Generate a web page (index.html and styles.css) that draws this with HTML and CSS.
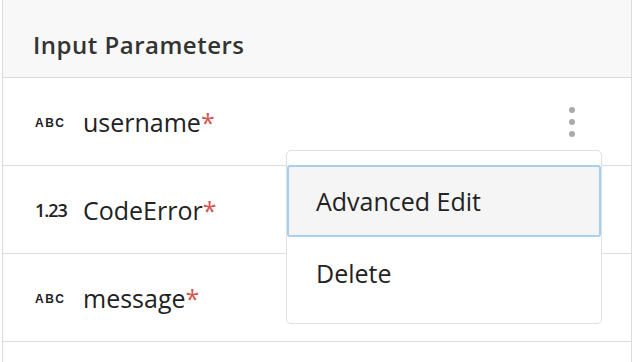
FILE: index.html
```html
<!DOCTYPE html>
<html lang="en">
<head>
    <meta charset="UTF-8">
    <title>Input Parameters</title>
    <link rel="stylesheet" href="styles.css">
</head>
<body>
    <div class="params-panel">
        <div class="panel-header">
            <h2 class="panel-title">Input Parameters</h2>
        </div>

        <div class="param-row">
            <span class="type-icon type-text">ABC</span>
            <span class="param-name">username<span class="required">*</span></span>
            <button class="kebab-btn" aria-label="More">
                <span class="dot"></span>
                <span class="dot"></span>
                <span class="dot"></span>
            </button>

            <div class="context-menu">
                <div class="menu-item active">Advanced Edit</div>
                <div class="menu-item">Delete</div>
            </div>
        </div>

        <div class="param-row">
            <span class="type-icon type-number">1.23</span>
            <span class="param-name">CodeError<span class="required">*</span></span>
        </div>

        <div class="param-row">
            <span class="type-icon type-text">ABC</span>
            <span class="param-name">message<span class="required">*</span></span>
        </div>
    </div>
</body>
</html>
```

FILE: styles.css
```css
* {
    margin: 0;
    padding: 0;
    box-sizing: border-box;
}

body {
    font-family: 'Open Sans', 'Noto Sans', sans-serif;
    color: #222;
    background: #fff;
}

.params-panel {
    margin-left: 2px;
    width: 630px;
    min-height: 362px;
    border-left: 1px solid #dcdcdc;
    border-right: 1px solid #dcdcdc;
}

.panel-header {
    height: 78px;
    padding: 28px 30px 0;
    background: #f8f8f8;
    border-bottom: 1px solid #dcdcdc;
}

.panel-title {
    font-size: 24px;
    font-weight: 600;
    letter-spacing: 0.5px;
    color: #333;
}

.param-row {
    position: relative;
    display: flex;
    align-items: center;
    height: 88px;
    padding: 0 56px 0 32px;
    border-bottom: 1px solid #dcdcdc;
}

.type-icon {
    width: 48px;
    flex-shrink: 0;
    color: #222;
}

.type-text {
    font-family: 'Liberation Sans', Arial, sans-serif;
    font-size: 12px;
    font-weight: 700;
    letter-spacing: 1.5px;
    padding-top: 2px;
}

.type-number {
    font-size: 18px;
    font-weight: 600;
    letter-spacing: -1px;
}

.param-name {
    flex: 1;
    font-size: 25px;
    color: #222;
}

.required {
    color: #d9534f;
}

.kebab-btn {
    display: flex;
    flex-direction: column;
    gap: 6px;
    background: none;
    border: none;
    padding: 0;
    cursor: pointer;
}

.dot {
    width: 6px;
    height: 6px;
    border-radius: 50%;
    background: #aaa;
}

/* menu opened from the kebab, overlays rows below */
.context-menu {
    position: absolute;
    top: 72px;
    left: 283px;
    width: 316px;
    padding: 14px 0;
    background: #fff;
    border: 1px solid #e0e0e0;
    border-radius: 5px;
    z-index: 5;
}

.menu-item {
    height: 72px;
    display: flex;
    align-items: center;
    padding-left: 27px;
    font-size: 25px;
    color: #222;
    border: 2px solid transparent;
    border-radius: 3px;
}

.menu-item.active {
    background: #f5f5f5;
    border-color: #a9cfee;
}
```
